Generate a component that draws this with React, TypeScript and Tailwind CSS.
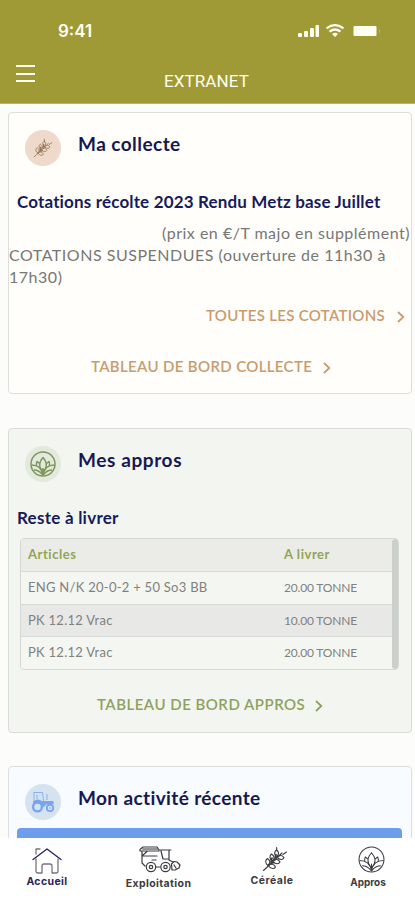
import React from "react";

type IconProps = { className?: string };

function Wheat({ className }: IconProps) {
  return (
    <svg viewBox="0 0 26 26" className={className} fill="none" stroke="currentColor" strokeWidth="1.1" strokeLinecap="round" strokeLinejoin="round">
      <path d="M1.500 24.500 L20 7 M14.500 1.500 L15 5 M24.500 6 L21 8.500" />
      <path d="M6 19.500 C2.500 17 3.500 14 5.500 12.500 C8.500 14.500 8.500 17 6 19.500Z M10.500 15 C7 12.500 7.500 9.500 9.500 8 C12.500 10 13 12.500 10.500 15Z M14.500 11 C11.500 8 12.500 5.500 14.500 4 C17.500 6 17 8.500 14.500 11Z" />
      <path d="M6.500 19.700 C9 23.500 12.500 23 13.500 21 C12 18 9 17.200 6.500 19.700Z M11 15.200 C13.500 18.800 17 18 18 16 C16.500 13 13.500 12.500 11 15.200Z M15 11.200 C17.500 14.500 21 13.800 22 11.800 C20.500 9 17.500 8.500 15 11.200Z" />
      <path strokeWidth="1.700" d="M9 16 L10 12 M13 12.500 L14 8.500 M9 17.500 L12 16.500" />
    </svg>
  );
}

function Lotus({ className }: IconProps) {
  return (
    <svg viewBox="0 0 26 26" className={className} fill="none" stroke="currentColor" strokeLinejoin="round">
      <circle cx="13" cy="13" r="12" />
      <path d="M13 6.500 C9.500 10.500 8.800 14 10.500 17.500 L13 21.500 L15.500 17.500 C17.200 14 16.500 10.500 13 6.500Z M13 17 V24" />
      <path d="M1.500 14 C7.500 14 12 17.500 13 24 M24.500 14 C18.500 14 14 17.500 13 24" />
      <path d="M6.500 15 C6.300 13 6.500 11.500 7 10.500 L9.500 12.500 M19.500 15 C19.700 13 19.500 11.500 19 10.500 L16.500 12.500 M4 19 Q9 19 13 24 Q17 19 22 19" />
    </svg>
  );
}

function Tractor({ className }: IconProps) {
  return (
    <svg viewBox="0 0 24 22" className={className} fill="none" stroke="currentColor" strokeLinejoin="round">
      <path strokeWidth="1" opacity=".8" d="M2.500 1.500 H11.500 L12.500 10 M3 1.500 V9 M6 4 V8 M16 3 V9" />
      <path fill="currentColor" stroke="none" d="M2 10 Q7 7 11 10 H22.500 V13.500 H15 L12.500 16.500 Q10 10.500 2 12.500Z" />
      <circle cx="6.500" cy="16" r="4.400" strokeWidth="2.400" />
      <circle cx="19" cy="17" r="3.200" strokeWidth="1.800" />
      <circle cx="19" cy="17" r=".8" fill="currentColor" stroke="none" />
    </svg>
  );
}

function Harvester({ className }: IconProps) {
  return (
    <svg viewBox="0 0 42 27" className={className} fill="none" stroke="currentColor" strokeWidth="1.200" strokeLinejoin="round" strokeLinecap="round">
      <path d="M1 3.500 L4 1 H18 L20 4 H32 M1 3.500 V5 H20 M3 5 V17 L6 20 M4 10 H8 M9 10 H18 M13 14 H17 M17 21 H21 M22 5 L24 13 H29 M30 4.500 V14 L34 16 M4 9 L8 5.500" />
      <path strokeWidth="1.800" opacity=".55" d="M4 3 H18" />
      <circle cx="12" cy="21" r="4.700" />
      <circle cx="12" cy="21" r="1.700" />
      <circle cx="26.500" cy="21" r="4.700" />
      <circle cx="26.500" cy="21" r="1.700" />
      <path d="M33 24 L32.500 18 L35 15.500 L38 16 L41 19 L40 22 L36 24Z M35 19 L37 22" />
    </svg>
  );
}

function House({ className }: IconProps) {
  return (
    <svg viewBox="0 0 30 27" className={className} fill="none" strokeWidth="1.300" strokeLinecap="round" strokeLinejoin="round">
      <path stroke="#77767f" d="M4 7 V2 H8 M4 12 V24 Q4 26 6 26 H10 V19 Q10 17 12 17 H18 Q20 17 20 19 V26 H24 Q26 26 26 24 V12" />
      <path stroke="#28245c" d="M1 12.500 L15 2 L29 12.500" />
    </svg>
  );
}

function Chevron() {
  return (
    <svg viewBox="0 0 8 12" className="mt-[3px] h-3 w-2 shrink-0" fill="none" stroke="currentColor" strokeWidth="1.800">
      <path d="M1 1 L6.300 6 L1 11" />
    </svg>
  );
}

function CardHeader({ icon, tint, title }: { icon: React.ReactNode; tint: string; title: React.ReactNode }) {
  return (
    <div className="flex pt-[17px] pl-4">
      <div className={`flex size-9 items-center justify-center rounded-full ${tint}`}>{icon}</div>
      <h2 className="ml-[17px] text-[19px] leading-[27px] font-bold whitespace-nowrap text-[#16194f]">{title}</h2>
    </div>
  );
}

const rows = [
  ["ENG N/K 20-0-2 + 50 So3 BB", "20.00 TONNE"],
  ["PK 12.12 Vrac", "10.00 TONNE"],
  ["PK 12.12 Vrac", "20.00 TONNE"],
];

export default function App() {
  return (
    <div className="flex h-[900px] w-[415px] flex-col overflow-hidden bg-[#fcfcfb] font-['Lato','Noto_Sans',sans-serif]">
      <header className="h-[104px] shrink-0 border-b border-[#b5b078] bg-[#9f9936] font-['Roboto',sans-serif] text-[#fffff2]">
        <div className="flex h-[62px] items-center justify-between pr-[34px] pl-[58px]">
          <span className="pt-px font-['Inter',sans-serif] text-[17px] font-semibold">9:41</span>
          <svg viewBox="0 0 84 16" className="h-4 w-[84px]" fill="currentColor">
            <rect x="1" y="10" width="4" height="4" rx="1" />
            <rect x="7" y="8" width="4" height="6" rx="1" />
            <rect x="13" y="5" width="4" height="9" rx="1" />
            <rect x="18.500" y="2" width="3.500" height="12" rx="1" />
            <g fill="none" stroke="currentColor" strokeWidth="2.300">
              <path d="M29.500 5.300 Q38 -1 46.500 5.300" />
              <path d="M32.500 8.600 Q38 4.300 43.500 8.600" />
            </g>
            <path d="M35 11 Q38 8.500 41 11 L38 14Z" />
            <rect x="56.500" y="3" width="23" height="10" rx="1" />
            <path opacity=".35" d="M82 6 Q84 8 82 10Z" />
          </svg>
        </div>
        <div className="flex">
          <div className="mt-[3px] ml-4 flex h-[17px] w-[19px] flex-col justify-between">
            <i className="h-[2px] bg-current" />
            <i className="h-[2px] bg-current" />
            <i className="h-[2px] bg-current" />
          </div>
          <h1 className="ml-[129px] pt-[8px] text-[17px] leading-[22px] tracking-[0.1px]">EXTRANET</h1>
        </div>
      </header>

      <main className="flex min-h-0 flex-1 flex-col overflow-hidden pt-2 pr-[3px] pl-2">
        <section className="h-[282px] shrink-0 rounded-[4px] border border-[#dcdedb] bg-[#fffefa]">
          <CardHeader tint="bg-[#eed9ca]" icon={<Wheat className="size-5 text-[#927354]" />} title={<span className="tracking-[0.45px]">Ma collecte</span>} />
          <h3 className="mt-[25px] ml-2 text-[17px] leading-[22px] font-bold tracking-[0.16px] whitespace-nowrap text-[#171b5b]">Cotations récolte 2023 Rendu Metz base Juillet</h3>
          <div className="mt-[9px] text-[16px] leading-[22px] whitespace-nowrap text-[#777775]">
            <p className="pr-px text-right tracking-[0.5px]">(prix en €/T majo en supplément)</p>
            <p className="tracking-[0.52px]">COTATIONS SUSPENDUES (ouverture de 11h30 à<br />17h30)</p>
          </div>
          <a className="mt-[16px] flex items-center justify-end pr-[6px] text-[15px] leading-[22px] font-semibold whitespace-nowrap text-[#c79c6f]">
            <span className="mr-[12px] tracking-[0.3px]">TOUTES LES COTATIONS</span><Chevron />
          </a>
          <a className="mt-[29px] ml-[82px] flex items-center text-[15px] leading-[22px] font-semibold whitespace-nowrap text-[#c79c6f]">
            <span className="mr-[11px] tracking-[0.35px]">TABLEAU DE BORD COLLECTE</span><Chevron />
          </a>
        </section>

        <section className="mt-[34px] h-[305px] shrink-0 rounded-[4px] border border-[#d9dcd8] bg-[#f3f6f0]">
          <CardHeader tint="bg-[#e3e9dc]" icon={<Lotus className="size-[26px] stroke-[1.5] text-[#7e965b]" />} title={<span className="tracking-[0.6px]">Mes appros</span>} />
          <h3 className="mt-[25px] ml-2 text-[17px] leading-[22px] font-bold tracking-[0.25px] text-[#171b5b]">Reste à livrer</h3>
          <div className="mt-[9px] ml-[11px] flex h-[132px] w-[379px] overflow-hidden rounded-[4px] border border-[#d5d7d3] text-[13px] text-[#81817f]">
            <div className="flex-1">
              <div className="flex h-8 items-center bg-[#ebece7] pl-[7px] font-bold text-[#93a454]">
                <span className="w-[256px] tracking-[0.55px]">Articles</span><span className="tracking-[0.55px]">A livrer</span>
              </div>
              {rows.map(([name, amount], i) => (
                <div key={i} className={`flex items-center border-t border-[#d8dad7] pl-[7px] ${i === 1 ? "h-8 bg-[#e8e8e7]" : "h-[33px] bg-[#f4f6f2]"}`}>
                  <span className="w-[256px] tracking-[0.27px]">{name}</span><span className="text-[12px] tracking-[-0.18px]">{amount}</span>
                </div>
              ))}
            </div>
            <div className="w-[6px] rounded-full bg-[#cdcfcc]" />
          </div>
          <a className="mt-[23px] ml-[88px] flex items-center text-[15px] leading-[22px] font-semibold whitespace-nowrap text-[#8fa15f]">
            <span className="mr-[10px] tracking-[0.5px]">TABLEAU DE BORD APPROS</span><Chevron />
          </a>
        </section>

        <section className="mt-[33px] h-[100px] shrink-0 rounded-[4px] border border-[#dcdedd] bg-[#f8fbff]">
          <CardHeader tint="bg-[#d5e2f0]" icon={<Tractor className="h-[22px] w-6 text-[#78a5ed]" />} title={<span className="tracking-[0.38px]">Mon activité récente</span>} />
          <div className="mt-2 mr-[9px] ml-2 h-8 rounded-t-[4px] bg-[#6d9eee]" />
        </section>
      </main>

      <nav className="flex h-[62px] shrink-0 bg-white font-['Inter',sans-serif] text-[10.5px] leading-[14px] font-bold text-[#3c3b40]">
        <div className="flex w-[94px] flex-col items-center pt-[9px] text-[#28245c]">
          <House className="h-[27px] w-[30px]" /><span className="mt-px tracking-[0.4px]">Accueil</span>
        </div>
        <div className="flex w-[129px] flex-col items-center pt-2">
          <Harvester className="ml-[2px] h-[27px] w-[42px]" /><span className="mt-[4px] tracking-[0.4px]">Exploitation</span>
        </div>
        <div className="flex w-[98px] flex-col items-center pt-[8px]">
          <Wheat className="ml-[5px] size-[26px]" /><span className="mt-[2px] tracking-[0.5px]">Céréale</span>
        </div>
        <div className="flex w-[94px] flex-col items-center pt-[8px]">
          <Lotus className="ml-[6px] size-[27px] stroke-1" /><span className="mt-[2px] text-[10px]">Appros</span>
        </div>
      </nav>
    </div>
  );
}
